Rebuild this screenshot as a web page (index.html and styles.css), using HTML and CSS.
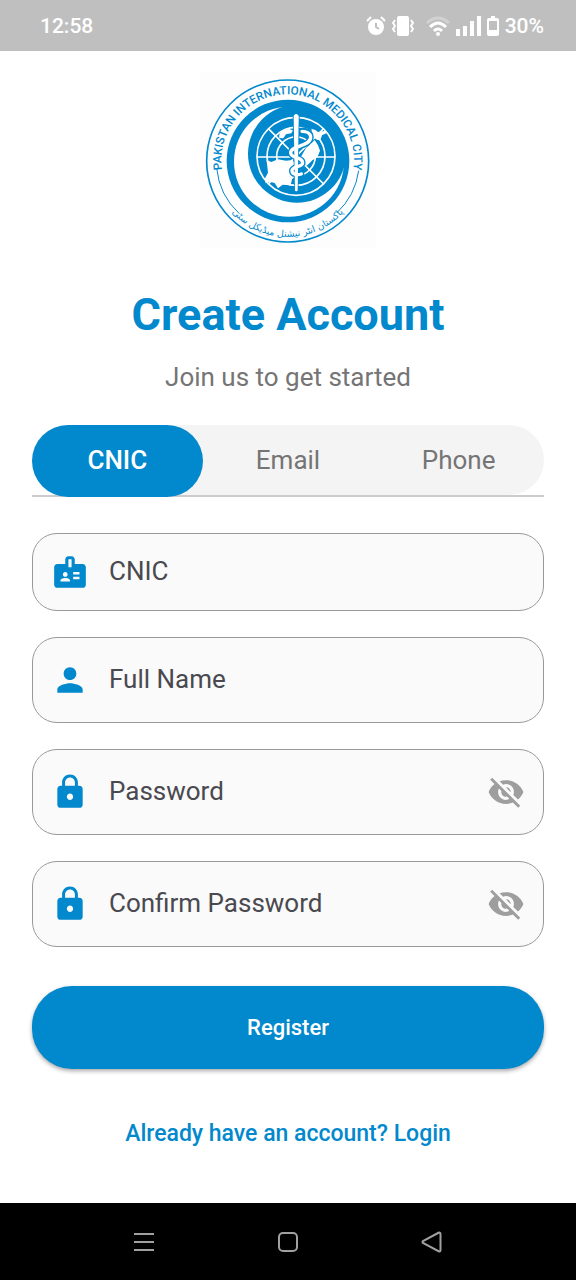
FILE: index.html
```html
<!DOCTYPE html>
<html lang="en">
<head>
<meta charset="utf-8">
<meta name="viewport" content="width=device-width, initial-scale=1">
<title>Create Account</title>
<link rel="stylesheet" href="styles.css">
</head>
<body>
<header class="status">
  <span class="status-time">12:58</span>
  <div class="status-icons">
    <svg class="ic-alarm" viewBox="0 0 20 20" width="20" height="20"><circle cx="10" cy="11" r="8" fill="#fff"/><path d="M1 5 5 1M19 5 15 1" stroke="#fff" stroke-width="2"/><path d="M10 7v4l3 2" fill="none" stroke="#bfbfbf" stroke-width="2"/></svg>
    <svg class="ic-vibrate" viewBox="0 0 22 20" width="22" height="20"><rect x="5" width="12" height="20" rx="2" fill="#fff"/><path d="M3 4 1 7l2 3-2 3 2 3M19 4l2 3-2 3 2 3-2 3" fill="none" stroke="#fff" stroke-width="2"/></svg>
    <svg class="ic-wifi" viewBox="0 0 24 20" width="24" height="20" fill="none" stroke="#fff" stroke-width="3"><path d="M1 7q11-10 22 0" stroke-opacity=".3"/><path d="M4 11q8-8 16 0M8 15q4-4 8 0"/><circle cx="12" cy="18" r="2" fill="#fff" stroke="none"/></svg>
    <svg class="ic-signal" viewBox="0 0 25 20" width="25" height="20" fill="#fff"><path d="M0 13h4v7H0zM7 10h4v10H7zM14 5h4v15h-4zM21 0h4v20h-4z"/></svg>
    <svg class="ic-battery" viewBox="0 0 12 20" width="12" height="20"><path d="M4 0h4v2h2a2 2 0 0 1 2 2v14a2 2 0 0 1-2 2H2a2 2 0 0 1-2-2V4a2 2 0 0 1 2-2h2zM2 5v9h8V5z" fill="#fff" fill-rule="evenodd"/></svg>
    <span>30%</span>
  </div>
</header>

<main class="page">
  <svg class="logo" viewBox="12 12 528 528" role="img" aria-label="Pakistan International Medical City">
    <defs>
      <path id="arc-top" d="M77 298A199 199 0 1 1 473 298"/>
      <path id="arc-bottom" d="M96 420A228 228 0 0 0 454 420"/>
    </defs>
    <circle cx="275" cy="279" r="243" fill="#fff" stroke="#0288cc" stroke-width="5"/>
    <circle cx="276" cy="279" r="184" fill="#0288cc"/>
    <circle cx="279" cy="281" r="165" fill="#fff"/>
    <circle cx="303" cy="257" r="147" fill="#0288cc"/>
    <g fill="none" stroke="#fff" stroke-width="5">
      <circle cx="300" cy="265" r="117"/>
      <circle cx="300" cy="265" r="87"/>
      <circle cx="300" cy="265" r="58"/>
      <path d="M183 267H417M217 182 383 348M383 182 217 348"/>
    </g>
    <g fill="#fff">
      <path d="M250 210c-4-18 14-26 30-27l10 4v8l-20 4-8 12zM346 182l12 4 8 6 24-4 4 6-16 8-4 12-10 2-12-8z"/>
      <path d="M330 240l14-12 12-12 10 16 6 16-8 20-14 8-16 16-20 6-6-20zM212 276l14 6 20-8 24 4 20-2 8 14 4 30-14 14-4 18-24-2-14 11-10-16-15-4-12 5-2-15 9-17z"/>
    </g>
    <path d="M296 196c20-14 48-10 48 12 0 28-60 24-60 46 0 18 36 12 36 30 0 14-32 10-32 24 0 11 14 14 28 10" fill="none" stroke="#0288cc" stroke-width="18" stroke-linecap="round"/>
    <path d="M292 142q8-12 17 0l-4 230h-8z" fill="#fff" stroke="#0288cc" stroke-width="4"/>
    <path d="M318 190c14 0 26 6 26 18 0 28-60 24-60 46 0 18 36 12 36 30 0 14-32 10-32 24 0 11 14 14 28 10" fill="none" stroke="#fff" stroke-width="10" stroke-linecap="round"/>
    <path d="M293 144q7-11 15 0l-3 224h-8z" fill="#fff"/>
    <path d="M62 300A214 214 0 0 0 130 437M488 308A214 214 0 0 1 422 435" fill="none" stroke="#0288cc" stroke-width="3"/>
    <text class="logo-text"><textPath href="#arc-top" startOffset="50%">PAKISTAN INTERNATIONAL MEDICAL CITY</textPath></text>
    <text class="logo-urdu" direction="rtl"><textPath href="#arc-bottom" startOffset="50%">پاکستان انٹر نیشنل میڈیکل سٹی</textPath></text>
  </svg>

  <h1 class="title">Create Account</h1>
  <p class="subtitle">Join us to get started</p>

  <div class="tabs" role="tablist">
    <button class="tab tab-active" type="button" role="tab" aria-selected="true">CNIC</button>
    <button class="tab" type="button" role="tab" aria-selected="false">Email</button>
    <button class="tab" type="button" role="tab" aria-selected="false">Phone</button>
  </div>

  <form class="form">
    <label class="field field-short">
      <svg class="icon" viewBox="0 0 24 24"><path d="M20 7h-5V4c0-1.100-.9-2-2-2h-2c-1.100 0-2 .9-2 2v3H4c-1.100 0-2 .9-2 2v11c0 1.100.9 2 2 2h16c1.100 0 2-.9 2-2V9c0-1.100-.9-2-2-2zM9 12c.83 0 1.500.67 1.500 1.500S9.830 15 9 15s-1.500-.67-1.500-1.500S8.170 12 9 12zm3 6H6v-.75c0-1 2-1.500 3-1.500s3 .5 3 1.500V18zm1-9h-2V4h2v5zm5 7.500h-4V15h4v1.500zm0-3h-4V12h4v1.500z"/></svg>
      <input class="input" type="text" name="cnic" placeholder="CNIC" aria-label="CNIC">
    </label>
    <label class="field">
      <svg class="icon" viewBox="0 0 24 24"><path d="M12 12c2.210 0 4-1.790 4-4s-1.790-4-4-4-4 1.790-4 4 1.790 4 4 4zm0 2c-2.670 0-8 1.340-8 4v2h16v-2c0-2.660-5.330-4-8-4z"/></svg>
      <input class="input" type="text" name="name" placeholder="Full Name" aria-label="Full Name">
    </label>
    <div class="field">
      <svg class="icon" viewBox="0 0 24 24"><path d="M18 8h-1V6c0-2.760-2.240-5-5-5S7 3.240 7 6v2H6c-1.100 0-2 .9-2 2v10c0 1.100.9 2 2 2h12c1.100 0 2-.9 2-2V10c0-1.100-.9-2-2-2zm-6 9c-1.100 0-2-.9-2-2s.9-2 2-2 2 .9 2 2-.9 2-2 2zm3.100-9H8.900V6c0-1.710 1.390-3.100 3.100-3.100s3.100 1.390 3.100 3.100v2z"/></svg>
      <input class="input" type="password" name="password" placeholder="Password" aria-label="Password">
      <button class="eye" type="button" aria-label="Show password"><svg class="icon icon-muted" viewBox="0 0 24 24"><path d="M12 7c2.760 0 5 2.240 5 5 0 .65-.13 1.260-.36 1.830l2.920 2.920c1.510-1.260 2.700-2.890 3.430-4.750-1.730-4.390-6-7.500-11-7.500-1.400 0-2.740.25-3.980.7l2.160 2.160C10.740 7.130 11.350 7 12 7zM2 4.270l2.280 2.280.46.46C3.080 8.300 1.780 10.020 1 12c1.730 4.390 6 7.500 11 7.500 1.550 0 3.030-.3 4.380-.84l.42.42L19.730 22 21 20.730 3.270 3 2 4.270zM7.530 9.800l1.550 1.550c-.05.21-.08.43-.08.65 0 1.660 1.340 3 3 3 .22 0 .44-.03.65-.08l1.550 1.550c-.67.33-1.410.53-2.200.53-2.760 0-5-2.240-5-5 0-.79.2-1.530.53-2.200zm4.310-.78l3.150 3.150.02-.16c0-1.660-1.340-3-3-3l-.17.01z"/></svg></button>
    </div>
    <div class="field">
      <svg class="icon" viewBox="0 0 24 24"><path d="M18 8h-1V6c0-2.760-2.240-5-5-5S7 3.240 7 6v2H6c-1.100 0-2 .9-2 2v10c0 1.100.9 2 2 2h12c1.100 0 2-.9 2-2V10c0-1.100-.9-2-2-2zm-6 9c-1.100 0-2-.9-2-2s.9-2 2-2 2 .9 2 2-.9 2-2 2zm3.100-9H8.900V6c0-1.710 1.390-3.100 3.100-3.100s3.100 1.390 3.100 3.100v2z"/></svg>
      <input class="input" type="password" name="confirm" placeholder="Confirm Password" aria-label="Confirm Password">
      <button class="eye" type="button" aria-label="Show confirmed password"><svg class="icon icon-muted" viewBox="0 0 24 24"><path d="M12 7c2.760 0 5 2.240 5 5 0 .65-.13 1.260-.36 1.830l2.920 2.920c1.510-1.260 2.700-2.890 3.430-4.750-1.730-4.390-6-7.500-11-7.500-1.400 0-2.740.25-3.980.7l2.160 2.160C10.740 7.130 11.350 7 12 7zM2 4.270l2.280 2.280.46.46C3.080 8.300 1.780 10.020 1 12c1.730 4.390 6 7.500 11 7.500 1.550 0 3.030-.3 4.380-.84l.42.42L19.730 22 21 20.730 3.270 3 2 4.270zM7.530 9.800l1.550 1.550c-.05.21-.08.43-.08.65 0 1.660 1.340 3 3 3 .22 0 .44-.03.65-.08l1.550 1.550c-.67.33-1.410.53-2.200.53-2.760 0-5-2.240-5-5 0-.79.2-1.530.53-2.200zm4.310-.78l3.150 3.150.02-.16c0-1.660-1.340-3-3-3l-.17.01z"/></svg></button>
    </div>
    <button class="register" type="submit">Register</button>
  </form>
  <a class="login" href="#login">Already have an account? Login</a>
</main>

<nav class="navbar" aria-label="System">
  <button class="nav-btn" type="button" aria-label="Recent apps"><svg viewBox="0 0 24 24" width="24" height="24"><path d="M2 4h20M2 12h20M2 20h20"/></svg></button>
  <button class="nav-btn" type="button" aria-label="Home"><svg viewBox="0 0 24 24" width="24" height="24"><rect x="3" y="3" width="18" height="18" rx="4"/></svg></button>
  <button class="nav-btn" type="button" aria-label="Back"><svg viewBox="0 0 24 24" width="24" height="24"><path d="M19 2.500 3 11q-1 1 0 2l16 8.500q1.500 0 1.500-1.500V4q0-1.500-1.500-1.500z"/></svg></button>
</nav>
</body>
</html>
```
FILE: styles.css
```css
* { box-sizing: border-box; }
body {
  margin: 0;
  min-height: 100vh;
  display: flex;
  flex-direction: column;
  background: #fff;
  font-family: Roboto, "Liberation Sans", sans-serif;
}
button, input { font: inherit; border: 0; padding: 0; margin: 0; background: none; }

.status {
  display: flex;
  justify-content: space-between;
  align-items: center;
  height: 51px;
  padding: 0 32px 0 40px;
  background: #bfbfbf;
  color: #fff;
  font-size: 21px;
  font-weight: 500;
}
.status-icons { display: flex; align-items: center; gap: 6px; }
.status-icons svg { display: block; }
.ic-wifi { margin-left: 6px; }

.page {
  flex: 1;
  display: flex;
  flex-direction: column;
  align-items: center;
  padding: 21px 32px 48px;
}
.logo { width: 176px; height: 176px; background: #fdfdfd; }
.logo-text {
  font-family: Roboto, sans-serif;
  font-size: 35px;
  font-weight: 500;
  fill: #0288cc;
  text-anchor: middle;
}
.logo-urdu {
  font-family: "DejaVu Sans", sans-serif;
  font-size: 28px;
  fill: #0288cc;
  text-anchor: middle;
}
.title {
  margin: 41px 0 0;
  color: #0288cc;
  font-size: 45px;
  line-height: 52px;
  font-weight: 700;
}
.subtitle {
  margin: 20px 0 0;
  color: #757575;
  font-size: 26px;
  line-height: 32px;
}

.tabs {
  align-self: stretch;
  display: grid;
  grid-template-columns: repeat(3, 1fr);
  height: 72px;
  margin-top: 32px;
  background: linear-gradient(#ccc, #ccc) bottom / 100% 2px no-repeat;
  position: relative;
}
.tabs::before {
  content: "";
  position: absolute;
  inset: 0 0 2px;
  border-radius: 36px;
  background: #f4f4f4;
}
.tab {
  position: relative;
  padding-bottom: 2px;
  border-radius: 40px;
  color: #757575;
  font-size: 26px;
}
.tab-active { background: #0288cc; color: #fff; font-weight: 500; }

.form {
  align-self: stretch;
  display: flex;
  flex-direction: column;
  gap: 26px;
  margin-top: 36px;
}
.field {
  display: flex;
  align-items: center;
  gap: 20px;
  height: 86px;
  padding: 0 18px;
  border: 1px solid #999;
  border-radius: 25px;
  background: #fafafa;
}
.field-short { height: 78px; }
.icon { display: block; flex: none; width: 38px; height: 38px; fill: #0288cc; }
.icon-muted { fill: #9e9e9e; }
.input {
  flex: 1;
  min-width: 0;
  height: 40px;
  padding-bottom: 2px;
  color: #212121;
  font-size: 26px;
  outline: 0;
}
.input::placeholder { color: #49494f; opacity: 1; }
.register {
  height: 83px;
  margin-top: 13px;
  border-radius: 40px;
  background: #0288cc;
  color: #fff;
  font-size: 22px;
  font-weight: 500;
  box-shadow: 0 2px 4px rgba(0, 0, 0, .35);
}
.login {
  margin-top: 51px;
  color: #0288cc;
  font-size: 23px;
  line-height: 28px;
  font-weight: 500;
  text-decoration: none;
}

.navbar {
  display: grid;
  grid-template-columns: repeat(3, 1fr);
  align-items: center;
  height: 77px;
  padding: 0 72px;
  background: #000;
}
.nav-btn { display: flex; justify-content: center; }
.nav-btn svg { fill: none; stroke: #a0a0a0; stroke-width: 2; }
```
